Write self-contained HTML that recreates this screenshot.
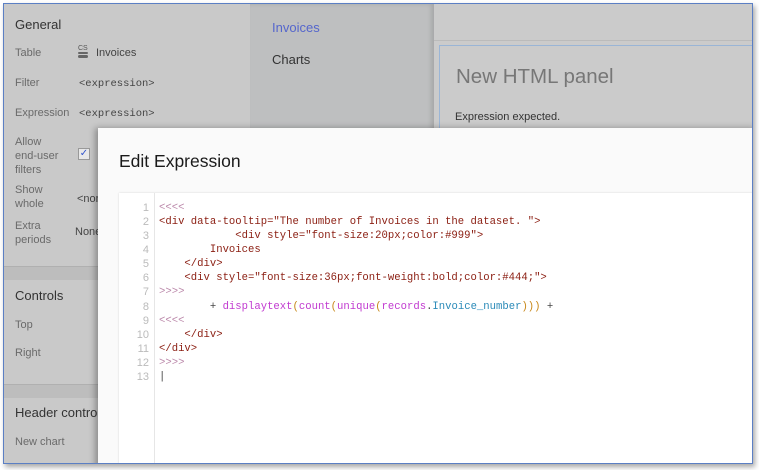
<!DOCTYPE html>
<html><head><style>
*{margin:0;padding:0;box-sizing:border-box}
body{width:759px;height:470px;background:#fff;font-family:"Liberation Sans",sans-serif;position:relative;overflow:hidden}
.frame{position:absolute;left:3px;top:3px;width:750px;height:461px;border:1px solid #5b7fc4;box-shadow:2px 3px 5px rgba(0,0,0,.35);overflow:hidden;background:#cbcbcb}
.left{position:absolute;left:0;top:0;width:246px;height:100%;background:#c9c9c9}
.nav{position:absolute;left:246px;top:0;width:184px;height:100%;background:#bebfc0;box-shadow:inset -3px 0 4px rgba(0,0,0,.12)}
.right{position:absolute;left:430px;top:0;right:0;height:100%;background:#cbcbcb}
.t{position:absolute;font-size:11px;color:#6a6a6a}
.h{position:absolute;font-size:13px;color:#333}
.m{font-family:"Liberation Mono",monospace;font-size:10.5px;color:#444}
.sep{position:absolute;left:0;width:246px;height:14px;background:#bdbdbd;border-top:1px solid #b0b0b0}
.dlg{position:absolute;left:94px;top:124px;width:660px;height:345px;background:#fafafa;box-shadow:-3px 0 6px rgba(0,0,0,.3)}
.ed{position:absolute;left:21px;top:65px;right:0;bottom:0;background:#fff;box-shadow:0 0 2px rgba(0,0,0,.15)}
.gut{position:absolute;left:0;top:0;width:36px;height:100%;border-right:1px solid #e6e6e6}
.code{position:absolute;top:8px;font-family:"Liberation Mono",monospace;font-size:10.6px;line-height:14.08px;white-space:pre}
.ln{left:0;width:30px;text-align:right;color:#bbb;font-family:"Liberation Sans",sans-serif;font-size:11px}
.cd{left:40px;color:#8b1e12}
.p{color:#b8a}.f{color:#c13ad0}.b{color:#2a8ab8}.o{color:#c8881a}.k{color:#444}
</style></head><body>
<div class="frame">
 <div class="left">
  <div class="h" style="left:11px;top:13px">General</div>
  <div class="t" style="left:11px;top:43px">Table</div>
  <svg style="position:absolute;left:73px;top:40px" width="12" height="15" viewBox="0 0 12 15"><text x="1" y="6" font-size="7" font-family="Liberation Sans" fill="#555">CS</text><rect x="1" y="8" width="10" height="2" rx="1" fill="#666"/><rect x="1" y="11" width="10" height="3" rx="1.5" fill="#666"/></svg>
  <div class="t" style="left:92px;top:43px;color:#444">Invoices</div>
  <div class="t" style="left:11px;top:73px">Filter</div>
  <div class="t m" style="left:75px;top:74px">&lt;expression&gt;</div>
  <div class="t" style="left:11px;top:103px">Expression</div>
  <div class="t m" style="left:75px;top:104px">&lt;expression&gt;</div>
  <div class="t" style="left:11px;top:131px;line-height:14px">Allow<br>end-user<br>filters</div>
  <div style="position:absolute;left:74px;top:144px;width:12px;height:12px;border:1px solid #999;background:#e8e8e8;font-size:10px;color:#3355cc;text-align:center;line-height:10px">✓</div>
  <div class="t" style="left:11px;top:179px;line-height:14px">Show<br>whole</div>
  <div class="t" style="left:73px;top:189px;color:#444">&lt;non</div>
  <div class="t" style="left:11px;top:215px;line-height:14px">Extra<br>periods</div>
  <div class="t" style="left:71px;top:222px;color:#444">None</div>
  <div class="sep" style="top:262px"></div>
  <div class="h" style="left:11px;top:284px">Controls</div>
  <div class="t" style="left:11px;top:315px">Top</div>
  <div class="t" style="left:11px;top:343px">Right</div>
  <div class="sep" style="top:380px"></div>
  <div class="h" style="left:11px;top:401px">Header control</div>
  <div class="t" style="left:11px;top:432px">New chart</div>
 </div>
 <div class="nav">
  <div class="h" style="left:22px;top:16px;color:#5566cc">Invoices</div>
  <div class="h" style="left:22px;top:48px;color:#333">Charts</div>
 </div>
 <div class="right">
  <div style="position:absolute;left:0;top:36px;right:0;height:1px;background:#bbb"></div>
  <div style="position:absolute;left:5px;top:41px;right:0;height:100px;border:1px solid #9ab5d6;border-right:none"></div>
  <div style="position:absolute;left:22px;top:61px;font-size:20.5px;color:#777">New HTML panel</div>
  <div style="position:absolute;left:21px;top:107px;font-size:11px;color:#333">Expression expected.</div>
 </div>
 <div class="dlg">
  <div style="position:absolute;left:21px;top:23px;font-size:17.5px;color:#1a1a1a">Edit Expression</div>
  <div class="ed">
   <div class="gut"></div>
<div class="code ln">1
2
3
4
5
6
7
8
9
10
11
12
13</div>
<div class="code cd"><span class="p">&lt;&lt;&lt;&lt;</span>
&lt;div data-tooltip="The number of Invoices in the dataset. "&gt;
            &lt;div style="font-size:20px;color:#999"&gt;
        Invoices
    &lt;/div&gt;
    &lt;div style="font-size:36px;font-weight:bold;color:#444;"&gt;
<span class="p">&gt;&gt;&gt;&gt;</span>
        <span class="k">+</span> <span class="f">displaytext</span><span class="o">(</span><span class="f">count</span><span class="o">(</span><span class="f">unique</span><span class="o">(</span><span class="f">records</span><span class="k">.</span><span class="b">Invoice_number</span><span class="o">)))</span> <span class="k">+</span>
<span class="p">&lt;&lt;&lt;&lt;</span>
    &lt;/div&gt;
&lt;/div&gt;
<span class="p">&gt;&gt;&gt;&gt;</span>
<span class="k">|</span></div>
  </div>
 </div>
</div>
</body></html>
